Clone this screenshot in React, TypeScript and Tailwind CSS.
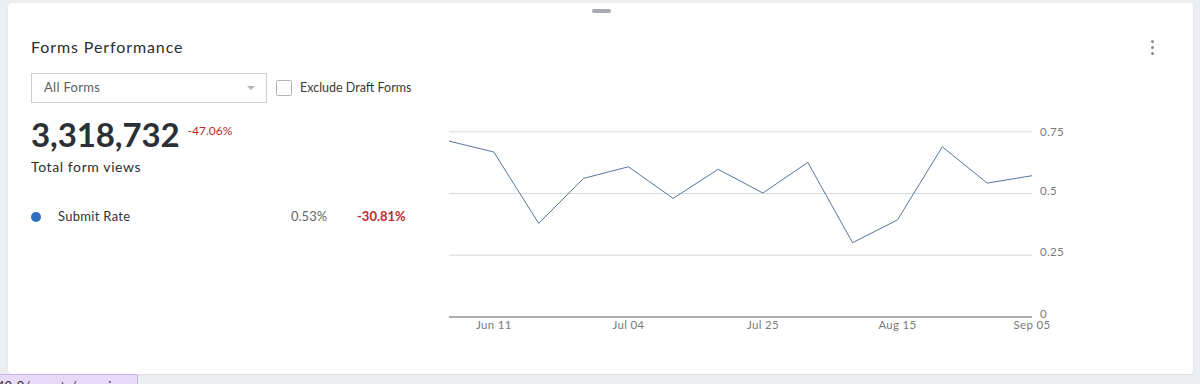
import React from 'react'

// Weekly submit rate values read off the chart, oldest first.
const rates = [0.712, 0.668, 0.379, 0.561, 0.608, 0.48, 0.598, 0.502, 0.626, 0.301, 0.393, 0.689, 0.542, 0.572]

const xTicks = [
	{ index: 1, label: 'Jun 11' },
	{ index: 4, label: 'Jul 04' },
	{ index: 7, label: 'Jul 25' },
	{ index: 10, label: 'Aug 15' },
	{ index: 13, label: 'Sep 05' },
]

const yTicks = [0.75, 0.5, 0.25, 0]

const PLOT_LEFT = 9
const PLOT_RIGHT = 592
const ZERO_Y = 204
const UNIT = 247

const xAt = (i: number) => PLOT_LEFT + (i * (PLOT_RIGHT - PLOT_LEFT)) / (rates.length - 1)
const yAt = (v: number) => ZERO_Y - v * UNIT

const RateChart: React.FC = () => {
	const path = rates.map((v, i) => `${i === 0 ? 'M' : 'L'}${xAt(i).toFixed(1)},${yAt(v).toFixed(1)}`).join(' ')
	return (
		<svg width={630} height={225} viewBox="0 0 630 225" className="mt-[40px] block">
			{yTicks.map((t) => (
				<g key={t}>
					<line
						x1={PLOT_LEFT}
						x2={PLOT_RIGHT}
						y1={yAt(t)}
						y2={yAt(t)}
						stroke={t === 0 ? '#8f9296' : '#d9d9d9'}
						strokeWidth={t === 0 ? 1.5 : 1}
					/>
					<text x={600} y={yAt(t) + (t === 0.75 ? 4 : 1)} fontSize={11.5} fill="#7a7a7a" letterSpacing={0.3}>
						{t}
					</text>
				</g>
			))}
			<path d={path} fill="none" stroke="#55779d" strokeWidth={1} strokeLinejoin="miter" />
			{xTicks.map((tick) => (
				<text
					key={tick.label}
					x={xAt(tick.index)}
					y={216}
					fontSize={11.5}
					fill="#7a7a7a"
					textAnchor="middle"
					letterSpacing={0.3}
				>
					{tick.label}
				</text>
			))}
		</svg>
	)
}

export default function App() {
	return (
		<div className="relative h-[384px] w-[1200px] overflow-hidden bg-[#eceef1] font-['Lato',sans-serif]">
			<div className="relative ml-2 mt-[3px] h-[371px] w-[1185px] rounded-sm bg-white pl-[23px] pr-[38px] pt-[34px] shadow-[0_1px_2px_rgba(0,0,0,0.08)]">
				<div className="absolute left-[584px] top-[6px] h-[4px] w-[19px] rounded-full bg-[#a7abb4]" />

				<div className="flex h-5 items-center justify-between">
					<h2 className="text-[16px] leading-5 tracking-[0.9px] text-[#2e2e2e]">Forms Performance</h2>
					<div className="flex flex-col gap-[3px] pr-[1px]">
						<span className="h-[3px] w-[3px] rounded-full bg-[#8a8a8a]" />
						<span className="h-[3px] w-[3px] rounded-full bg-[#8a8a8a]" />
						<span className="h-[3px] w-[3px] rounded-full bg-[#8a8a8a]" />
					</div>
				</div>

				<div className="mt-4 flex">
					<div className="w-[409px]">
						<div className="flex items-center">
							<div className="flex h-[30px] w-[236px] items-center justify-between border border-[#cfcfcf] pl-3 pr-[11px]">
								<span className="text-[13px] tracking-[0.3px] text-[#5e5e5e]">All Forms</span>
								<span className="h-0 w-0 border-x-[4px] border-t-[4px] border-x-transparent border-t-[#b3b3b3]" />
							</div>
							<span className="ml-[9px] h-4 w-4 rounded-[2px] border border-[#b5b5b5]" />
							<span className="ml-[8px] text-[12.5px] text-[#3a3a3a]">Exclude Draft Forms</span>
						</div>

						<div className="mt-[12px] flex items-end">
							<span className="text-[33px] font-bold leading-[38px] tracking-[-0.1px] text-[#2b2f36]">3,318,732</span>
							<span className="mb-[13px] ml-[8px] text-[12px] text-[#c0282d]">-47.06%</span>
						</div>
						<div className="mt-[4px] text-[14px] leading-5 tracking-[0.6px] text-[#2e2e2e]">Total form views</div>

						<div className="mt-[30px] flex h-5 items-center text-[13px]">
							<span className="h-[10px] w-[10px] rounded-full bg-[#2f6fbf]" />
							<span className="ml-[17px] w-[233px] tracking-[0.3px] text-[#333]">Submit Rate</span>
							<span className="w-[66px] text-[#666]">0.53%</span>
							<span className="font-bold text-[#c0282d]">-30.81%</span>
						</div>
					</div>
					<RateChart />
				</div>
			</div>

			<div className="absolute bottom-[-6px] left-0 h-[16px] w-[138px] overflow-hidden rounded-tr-[3px] border border-l-0 border-[#c9b3ea] bg-[#e7daf8]">
				<span className="ml-[-3px] block whitespace-nowrap text-[13px] leading-[22px] text-[#333]">40r0/reports/overview</span>
			</div>
		</div>
	)
}
